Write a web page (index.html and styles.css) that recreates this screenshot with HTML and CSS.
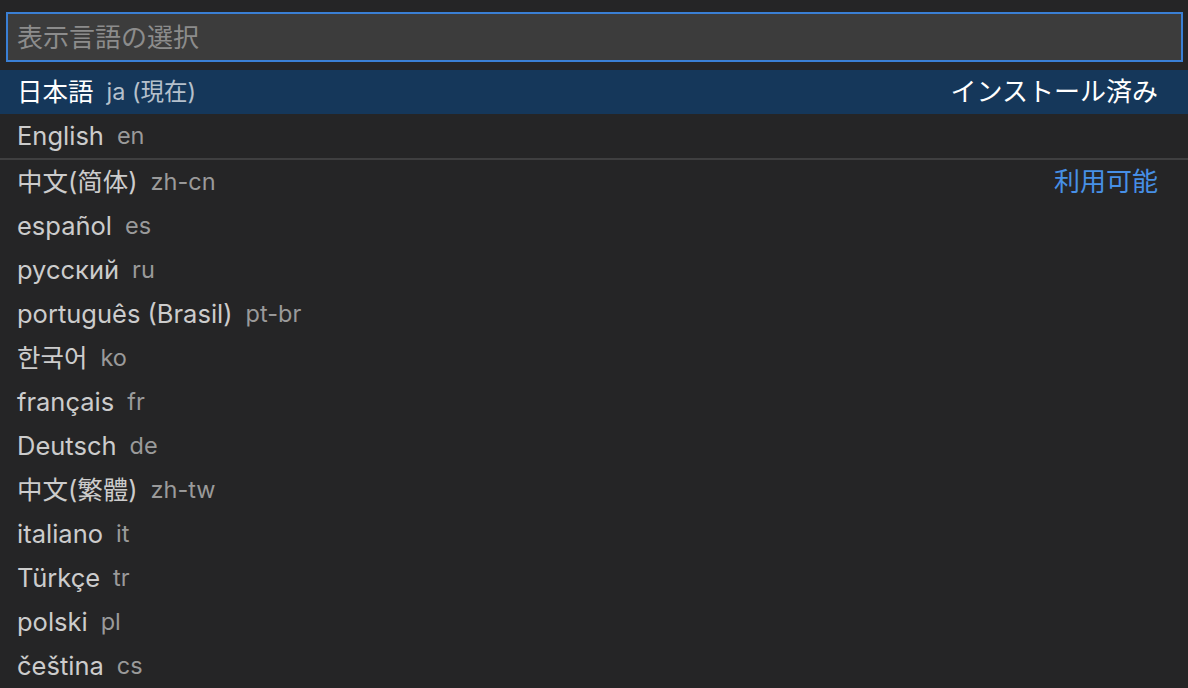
FILE: index.html
```html
<!DOCTYPE html>
<html lang="ja">
<head>
<meta charset="utf-8">
<link rel="stylesheet" href="styles.css">
</head>
<body>
<div class="quick-input">
  <div class="input-box">
    <input class="input" type="text" placeholder="表示言語の選択">
  </div>
  <div class="list">
    <div class="row selected"><span class="label">日本語</span><span class="desc">ja (現在)</span><span class="tag">インストール済み</span></div>
    <div class="row"><span class="label">English</span><span class="desc">en</span></div>
    <div class="row sep"><span class="label">中文(简体)</span><span class="desc">zh-cn</span><span class="tag link">利用可能</span></div>
    <div class="row"><span class="label">español</span><span class="desc">es</span></div>
    <div class="row"><span class="label">русский</span><span class="desc">ru</span></div>
    <div class="row"><span class="label">português (Brasil)</span><span class="desc">pt-br</span></div>
    <div class="row"><span class="label">한국어</span><span class="desc">ko</span></div>
    <div class="row"><span class="label">français</span><span class="desc">fr</span></div>
    <div class="row"><span class="label">Deutsch</span><span class="desc">de</span></div>
    <div class="row"><span class="label">中文(繁體)</span><span class="desc">zh-tw</span></div>
    <div class="row"><span class="label">italiano</span><span class="desc">it</span></div>
    <div class="row"><span class="label">Türkçe</span><span class="desc">tr</span></div>
    <div class="row"><span class="label">polski</span><span class="desc">pl</span></div>
    <div class="row"><span class="label">čeština</span><span class="desc">cs</span></div>
  </div>
</div>
</body>
</html>
```
FILE: styles.css
```css
html, body {
  margin: 0;
  padding: 0;
  background: #252526;
  height: 100%;
  overflow: hidden;
}
body {
  font-family: Inter, "Noto Sans CJK JP", sans-serif;
  font-size: 25px;
  color: #cccccc;
}
.quick-input {
  padding-top: 12px;
}
.input-box {
  margin: 0 5px 0 6px;
  height: 50px;
  box-sizing: border-box;
  border: 2px solid #3a7fd4;
  background: #3c3c3c;
  display: flex;
  align-items: center;
}
.input {
  flex: 1;
  border: none;
  outline: none;
  background: transparent;
  font: inherit;
  font-size: 26px;
  color: #cccccc;
  padding: 0 0 0 9px;
  height: 100%;
}
.input::placeholder {
  color: #8c8c8c;
}
.list {
  margin-top: 8px;
}
.row {
  display: flex;
  align-items: center;
  height: 44px;
  line-height: 44px;
  padding: 0 30px 0 17px;
  white-space: nowrap;
}
.row.sep {
  border-top: 2px solid #3f3f40;
}
.label {
  font-size: 25.5px;
}
.desc {
  margin-left: 13px;
  font-size: 23.5px;
  color: #9a9a9a;
}
.tag {
  margin-left: auto;
  font-size: 26px;
}
.tag.link {
  color: #4790e6;
}
.row.selected {
  background: #15375a;
  color: #ffffff;
}
.row.selected .desc {
  color: #b5c0cc;
}
```
